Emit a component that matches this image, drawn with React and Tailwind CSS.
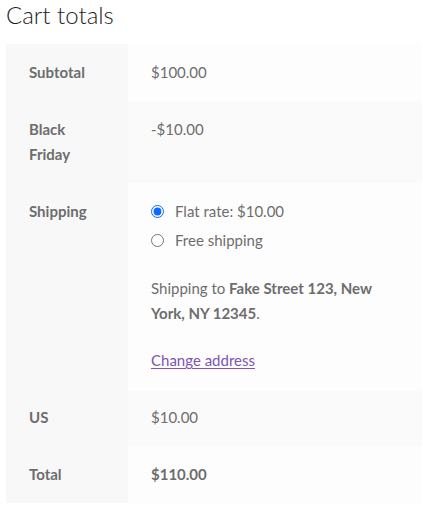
import React, { useState } from 'react';

const rowsTop = [
  { label: 'Subtotal', value: '$100.00' },
  { label: 'Black Friday', value: '-$10.00' },
];

const CartTotals = () => {
  const [method, setMethod] = useState('flat');

  const th = 'w-[122px] bg-[#f8f8f8] px-[23px] py-4 text-left align-top font-bold';
  const td = 'px-[23px] py-4 align-top';

  return (
    <div className="pl-[6px] pr-px font-['Lato',sans-serif] text-[15px] leading-[25px] text-[#6d6d6d]">
      <h2 className="text-[24px] font-light leading-[30px] text-[#1d1d1d] mb-[14px]">Cart totals</h2>

      <table className="w-[416px] border-collapse">
        <tbody>
          {rowsTop.map((row, i) => (
            <tr key={row.label}>
              <th className={`${th} ${i === 1 ? 'pr-[40px]' : ''}`}>{row.label}</th>
              <td className={`${td} ${i % 2 === 0 ? 'bg-[#fdfdfd]' : 'bg-[#fafafa]'}`}>{row.value}</td>
            </tr>
          ))}

          <tr>
            <th className={th}>Shipping</th>
            <td className={`${td} bg-[#fdfdfd] pb-[18px]`}>
              <ul className="mb-[23px]">
                <li className="flex items-center h-[25px] mb-1">
                  <input
                    type="radio"
                    name="ship"
                    checked={method === 'flat'}
                    onChange={() => setMethod('flat')}
                    className="m-0 mr-[11px] w-[13px] h-[13px] accent-[#0a6cff]"
                  />
                  <span>Flat rate: $10.00</span>
                </li>
                <li className="flex items-center h-[25px]">
                  <input
                    type="radio"
                    name="ship"
                    checked={method === 'free'}
                    onChange={() => setMethod('free')}
                    className="m-0 mr-[11px] w-[13px] h-[13px] accent-[#0a6cff]"
                  />
                  <span>Free shipping</span>
                </li>
              </ul>
              <p className="mb-[22px]">
                Shipping to <strong className="font-bold">Fake Street 123, New York, NY 12345</strong>.
              </p>
              <a href="#" className="text-[#7f54b3] underline underline-offset-2">Change address</a>
            </td>
          </tr>

          <tr>
            <th className={`${th} pt-[14px]`}>US</th>
            <td className={`${td} bg-[#fafafa] pt-[14px]`}>$10.00</td>
          </tr>

          <tr>
            <th className={th}>Total</th>
            <td className={`${td} bg-[#fdfdfd] font-bold`}>$110.00</td>
          </tr>
        </tbody>
      </table>
    </div>
  );
};

export default function App() {
  return <CartTotals />;
}
